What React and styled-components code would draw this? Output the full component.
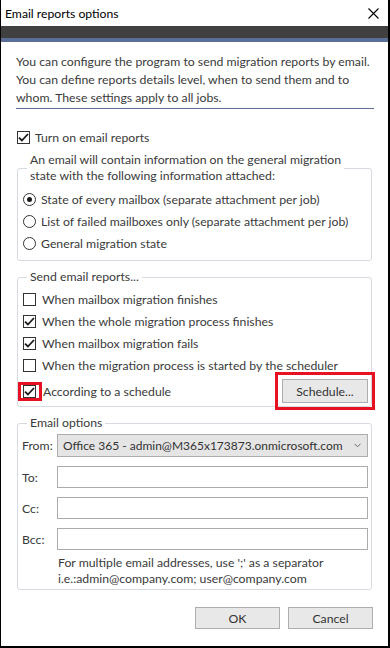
import React from "react";
import styled, { createGlobalStyle } from "styled-components";

const GlobalStyle = createGlobalStyle`
  html, body {
    margin: 0;
    padding: 0;
    background: #fff;
  }
  body {
    font-family: Lato, "Open Sans", sans-serif;
    font-size: 12.25px;
    color: #3a3a3a;
  }
  * { box-sizing: border-box; }
`;

const Window = styled.div`
  width: 390px;
  height: 648px;
  background: #fff;
  border-left: 1px solid #000;
  border-right: 2px solid #000;
  border-bottom: 2px solid #000;
  display: flex;
  flex-direction: column;
`;

const TitleBar = styled.div`
  height: 26px;
  display: flex;
  align-items: center;
  justify-content: space-between;
  padding: 0 9px 0 4px;
  color: #000;
  font-size: 12.2px;
`;

const DarkBand = styled.div`
  height: 12px;
  background: #404040;
`;

const BlueBand = styled.div`
  height: 4px;
  background: #5a6e96;
`;

const Content = styled.div`
  flex: 1;
  display: flex;
  flex-direction: column;
  padding: 11px 14px 0 15px;
`;

const Intro = styled.p`
  margin: 0;
  line-height: 18px;
  white-space: nowrap;
`;

const Divider = styled.hr`
  margin: 1px 0 0;
  border: 0;
  height: 1px;
  background: #5a6e96;
`;

const Row = styled.label`
  display: flex;
  align-items: center;
  height: ${(p) => p.$h || 22}px;
  gap: ${(p) => p.$gap || 6}px;
  white-space: nowrap;
`;

const Box = styled.span`
  position: relative;
  flex: none;
  width: 13px;
  height: 13px;
  border: 1px solid #333;
  background: #fff;
  display: flex;
  align-items: center;
  justify-content: center;
  ${(p) =>
    p.$marked &&
    `&::after {
      content: "";
      position: absolute;
      inset: -4px -7px -4px -6px;
      border: 3px solid #e81123;
    }`}
`;

const Radio = styled.span`
  flex: none;
  width: 13px;
  height: 13px;
  border: 1px solid #333;
  border-radius: 50%;
  display: flex;
  align-items: center;
  justify-content: center;
  &::before {
    content: "";
    width: 5px;
    height: 5px;
    border-radius: 50%;
    background: ${(p) => (p.$on ? "#1a1a1a" : "transparent")};
  }
`;

const Group = styled.fieldset`
  margin: ${(p) => p.$top || 8}px 2px 0 1px;
  padding: ${(p) => p.$padTop || 3}px 3px ${(p) => p.$padBottom || 6}px 5px;
  border: 1px solid #d6dbe2;
  border-radius: 3px;
  min-width: 0;
`;

const Legend = styled.legend`
  margin-left: 4px;
  padding: 0 3px;
  line-height: 16px;
  white-space: nowrap;
`;

const ScheduleRow = styled.div`
  display: flex;
  align-items: center;
  justify-content: space-between;
  margin-top: 3px;
`;

const Button = styled.button`
  font: inherit;
  color: #333;
  height: ${(p) => p.$h || 22}px;
  width: ${(p) => p.$w || 85}px;
  background: #e8e8e8;
  border: 1px solid #adadad;
  padding: 0;
  ${(p) => p.$marked && `outline: 3px solid #e81123; outline-offset: 4px;`}
`;

const Fields = styled.div`
  display: grid;
  grid-template-columns: 35px 1fr;
  row-gap: 9px;
  align-items: center;
  margin-left: -1px;
`;

const FieldLabel = styled.span`
  padding-left: 0;
`;

const Select = styled.div`
  height: 23px;
  background: #e5e5e5;
  border: 1px solid #acacac;
  display: flex;
  align-items: center;
  justify-content: space-between;
  padding: 0 6px 0 5px;
  white-space: nowrap;
  color: #333;
  font-size: 12px;
`;

const Input = styled.input`
  height: 22px;
  border: 1px solid #ababab;
  background: #fff;
  font: inherit;
`;

const Hint = styled.div`
  margin: 5px 0 0 35px;
  line-height: 16px;
  white-space: nowrap;
`;

const Footer = styled.div`
  display: flex;
  justify-content: flex-end;
  gap: 8px;
  margin: 17px 1px 0 0;
`;

const Check = () => (
  <svg width="11" height="9" viewBox="0 0 11 9">
    <path d="M1 4.6 L3.9 7.5 L10 1" fill="none" stroke="#1a1a1a" strokeWidth="1.8" />
  </svg>
);

function CheckRow({ checked, marked, children, gap }) {
  return (
    <Row $gap={gap}>
      <Box $marked={marked}>{checked && <Check />}</Box>
      {children}
    </Row>
  );
}

export default function App() {
  return (
    <>
      <GlobalStyle />
      <Window>
        <TitleBar>
          <span>Email reports options</span>
          <svg width="11" height="11" viewBox="0 0 11 11">
            <path d="M0.5 0.5 L10.5 10.5 M10.5 0.5 L0.5 10.5" stroke="#000" strokeWidth="1.1" />
          </svg>
        </TitleBar>
        <DarkBand />
        <BlueBand />
        <Content>
          <Intro>
            You can configure the program to send migration reports by email.
            <br />
            You can define reports details level, when to send them and to
            <br />
            whom. These settings apply to all jobs.
          </Intro>
          <Divider />

          <div style={{ marginTop: 17, marginLeft: 1 }}>
            <CheckRow checked gap={5}>Turn on email reports</CheckRow>
          </div>

          <Group $top={4} $padTop={4} $padBottom={6}>
            <Legend>
              An email will contain information on the general migration
              <br />
              state with the following information attached:
            </Legend>
            <Row $gap={5}>
              <Radio $on />
              State of every mailbox (separate attachment per job)
            </Row>
            <Row $gap={5}>
              <Radio />
              List of failed mailboxes only (separate attachment per job)
            </Row>
            <Row $gap={5}>
              <Radio />
              General migration state
            </Row>
          </Group>

          <Group $padTop={3} $padBottom={3}>
            <Legend>Send email reports...</Legend>
            <CheckRow>When mailbox migration finishes</CheckRow>
            <CheckRow checked>When the whole migration process finishes</CheckRow>
            <CheckRow checked>When mailbox migration fails</CheckRow>
            <CheckRow>When the migration process is started by the scheduler</CheckRow>
            <ScheduleRow>
              <CheckRow checked marked gap={7}>According to a schedule</CheckRow>
              <Button $w={86} $h={24} $marked>Schedule...</Button>
            </ScheduleRow>
          </Group>

          <Group $padTop={3} $padBottom={2}>
            <Legend>Email options</Legend>
            <Fields>
              <FieldLabel>From:</FieldLabel>
              <Select>
                <span>Office 365 - admin@M365x173873.onmicrosoft.com</span>
                <svg width="7" height="5" viewBox="0 0 7 5">
                  <path d="M0.5 0.8 L3.5 3.8 L6.5 0.8" fill="none" stroke="#666" strokeWidth="1" />
                </svg>
              </Select>
              <FieldLabel>To:</FieldLabel>
              <Input />
              <FieldLabel>Cc:</FieldLabel>
              <Input />
              <FieldLabel>Bcc:</FieldLabel>
              <Input />
            </Fields>
            <Hint>
              For multiple email addresses, use ';' as a separator
              <br />
              i.e.:admin@company.com; user@company.com
            </Hint>
          </Group>

          <Footer>
            <Button>OK</Button>
            <Button>Cancel</Button>
          </Footer>
        </Content>
      </Window>
    </>
  );
}
